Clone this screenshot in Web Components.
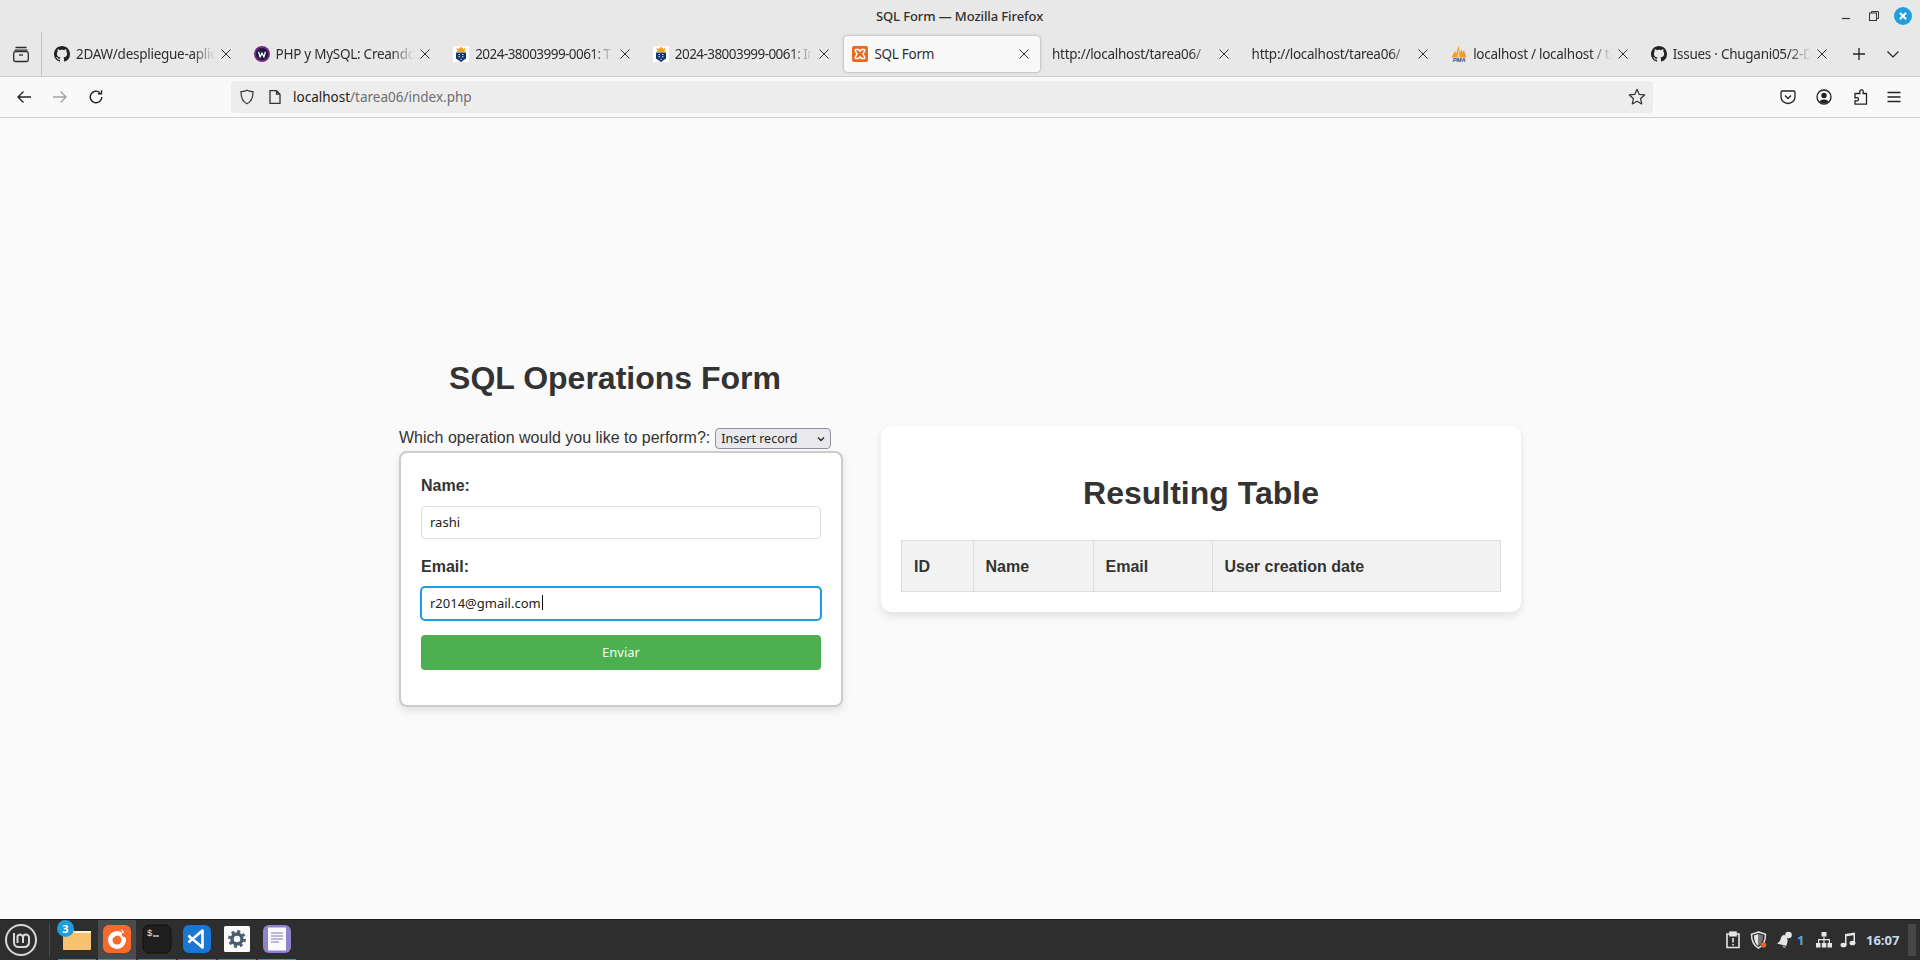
<!DOCTYPE html>
<html lang="en"><head><meta charset="utf-8"><title>SQL Form</title>
<style>
html,body{margin:0;padding:0;height:100%;overflow:hidden;background:#fafafa}
x-window{--ui:"Noto Sans","Open Sans",sans-serif}
.digits{letter-spacing:-.55px}
</style></head><body>
<x-window>
  <x-titlebar slot="title">SQL Form — Mozilla Firefox</x-titlebar>
  <x-tabstrip slot="tabs">
    <x-tab><svg slot="icon" viewBox="0 0 16 16"><path fill="#222" d="M8 0C3.58 0 0 3.58 0 8c0 3.54 2.29 6.53 5.47 7.59.4.07.55-.17.55-.38 0-.19-.01-.82-.01-1.49-2.01.37-2.53-.49-2.69-.94-.09-.23-.48-.94-.82-1.13-.28-.15-.68-.52-.01-.53.63-.01 1.08.58 1.23.82.72 1.21 1.87.87 2.33.66.07-.52.28-.87.51-1.07-1.78-.2-3.64-.89-3.64-3.95 0-.87.31-1.59.82-2.15-.08-.2-.36-1.02.08-2.12 0 0 .67-.21 2.2.82.64-.18 1.32-.27 2-.27.68 0 1.36.09 2 .27 1.53-1.04 2.2-.82 2.2-.82.44 1.1.16 1.92.08 2.12.51.56.82 1.27.82 2.15 0 3.07-1.87 3.75-3.65 3.95.29.25.54.73.54 1.48 0 1.07-.01 1.93-.01 2.2 0 .21.15.46.55.38A8.013 8.013 0 0016 8c0-4.42-3.58-8-8-8z"/></svg>2DAW/despliegue-aplica</x-tab>
    <x-tab><svg slot="icon" viewBox="0 0 16 16"><circle cx="8" cy="8" r="8" fill="#7b2c8e"/><circle cx="8" cy="8" r="6.2" fill="#221a3d"/><path d="M4.500 5.800l1.600 5 1.900-3.600 1.900 3.600 1.600-5" fill="none" stroke="#fff" stroke-width="1.300"/></svg>PHP y MySQL: Creando s</x-tab>
    <x-tab class="digits"><svg slot="icon" viewBox="0 0 16 16"><rect width="16" height="16" fill="#fff"/><path d="M3.500 1.500l2 1.500L8 .5l2.500 2.500 2-1.500-.8 4.500H4.300z" fill="#f2a51e"/><path d="M3 6.500h10v6L8 16l-5-3.500z" fill="#12376f"/><path d="M5.500 8.500h1.500M9 8.500h1.500M5.500 10.800h1.500M9 10.800h1.500M7.300 13.200h1.500" stroke="#dfe7f3" stroke-width="1.100"/></svg>2024-38003999-0061: T</x-tab>
    <x-tab class="digits"><svg slot="icon" viewBox="0 0 16 16"><rect width="16" height="16" fill="#fff"/><path d="M3.500 1.500l2 1.500L8 .5l2.500 2.500 2-1.500-.8 4.500H4.300z" fill="#f2a51e"/><path d="M3 6.500h10v6L8 16l-5-3.500z" fill="#12376f"/><path d="M5.500 8.500h1.500M9 8.500h1.500M5.500 10.800h1.500M9 10.800h1.500M7.300 13.200h1.500" stroke="#dfe7f3" stroke-width="1.100"/></svg>2024-38003999-0061: In</x-tab>
    <x-tab active><svg slot="icon" viewBox="0 0 16 16"><rect width="16" height="16" rx="2" fill="#e8691f"/><path d="M4 3.500h2.500L8 5.300 9.500 3.500H12a1 1 0 0 1 .6 1.600L11 8l1.600 2.900A1 1 0 0 1 12 12.500H9.500L8 10.700 6.500 12.500H4a1 1 0 0 1-.6-1.600L5 8 3.400 5.100A1 1 0 0 1 4 3.500z" fill="none" stroke="#fff" stroke-width="1.500"/></svg>SQL Form</x-tab>
    <x-tab>http://localhost/tarea06/</x-tab>
    <x-tab>http://localhost/tarea06/</x-tab>
    <x-tab><svg slot="icon" viewBox="0 0 16 16"><path d="M.5 11.500L4 4.500l1 3.500L7.500 0 9 7l1.500-3.500 1 3L13 4l2.500 7.500z" fill="#f29a2e"/><path d="M6 11.500L7.500 3 9 11.500z" fill="#f9d08a"/><text x="8" y="16" text-anchor="middle" font-family="Liberation Sans" font-size="6" font-weight="700" font-style="italic" fill="#2f5288">PMA</text></svg>localhost / localhost / ta</x-tab>
    <x-tab><svg slot="icon" viewBox="0 0 16 16"><path fill="#222" d="M8 0C3.58 0 0 3.58 0 8c0 3.54 2.29 6.53 5.47 7.59.4.07.55-.17.55-.38 0-.19-.01-.82-.01-1.49-2.01.37-2.53-.49-2.69-.94-.09-.23-.48-.94-.82-1.13-.28-.15-.68-.52-.01-.53.63-.01 1.08.58 1.23.82.72 1.21 1.87.87 2.33.66.07-.52.28-.87.51-1.07-1.78-.2-3.64-.89-3.64-3.95 0-.87.31-1.59.82-2.15-.08-.2-.36-1.02.08-2.12 0 0 .67-.21 2.2.82.64-.18 1.32-.27 2-.27.68 0 1.36.09 2 .27 1.53-1.04 2.2-.82 2.2-.82.44 1.1.16 1.92.08 2.12.51.56.82 1.27.82 2.15 0 3.07-1.87 3.75-3.65 3.95.29.25.54.73.54 1.48 0 1.07-.01 1.93-.01 2.2 0 .21.15.46.55.38A8.013 8.013 0 0016 8c0-4.42-3.58-8-8-8z"/></svg>Issues · Chugani05/2-DA</x-tab>
  </x-tabstrip>
  <x-toolbar slot="toolbar"><span class="host">localhost</span><span style="color:#6e6e6e">/tarea06/index.php</span></x-toolbar>
  <x-page slot="page">
    <x-form-panel slot="left" heading="SQL Operations Form" prompt="Which operation would you like to perform?:" option="Insert record"></x-form-panel>
    <x-result-card slot="right" heading="Resulting Table"></x-result-card>
  </x-page>
  <x-taskbar slot="taskbar"></x-taskbar>
</x-window>
<script>
function def(name,html,init){
  customElements.define(name,class extends HTMLElement{
    constructor(){super();const r=this.attachShadow({mode:'open'});r.innerHTML=typeof html==='function'?html(this):html;}
    connectedCallback(){ if(init&&!this._i){this._i=1;init(this,this.shadowRoot);} }
  });
}
def('x-window',`<style>:host{display:flex;flex-direction:column;height:960px;width:1920px;overflow:hidden;font-family:var(--ui)}
::slotted([slot=page]){flex:1}</style>
<slot name="title"></slot><slot name="tabs"></slot><slot name="toolbar"></slot><slot name="page"></slot><slot name="taskbar"></slot>`);

def('x-titlebar',`<style>:host{display:grid;grid-template-columns:1fr auto 1fr;align-items:center;height:32px;background:#e8e8e8;color:#2e2e2e;font-size:13px;letter-spacing:-.1px;font-weight:500}
.t{margin-left:-1px}
.c{display:flex;justify-content:flex-end;align-items:center;gap:0;padding-right:3px}
.b{width:28.500px;height:20px;display:flex;align-items:center;justify-content:center}
svg{display:block}</style>
<span></span><span class="t"><slot></slot></span>
<div class="c">
<span class="b"><svg width="12" height="12" viewBox="0 0 12 12"><path d="M2 8.500h8" stroke="#333" stroke-width="1.200"/></svg></span>
<span class="b"><svg width="12" height="12" viewBox="0 0 12 12" fill="none" stroke="#333"><rect x="1.500" y="3" width="7" height="7.500"/><path d="M3.500 3V1.500h7V8.500H8.500"/></svg></span>
<span class="b"><svg width="20" height="20" viewBox="0 0 20 20"><circle cx="10" cy="10" r="9" fill="#1f9ede"/><path d="M6.800 6.800l6.400 6.400M13.200 6.800l-6.400 6.400" stroke="#fff" stroke-width="2"/></svg></span>
</div>`);

def('x-tabstrip',`<style>:host{display:flex;align-items:stretch;height:45px;box-sizing:border-box;background:#e8e8e8;border-bottom:1px solid #cfcfcf}
.side{width:42px;display:flex;align-items:center;justify-content:center;box-sizing:border-box;border-right:1px solid #c4c4c4}
.gap{width:2px}
.tabs{display:grid;grid-template-columns:repeat(9,199.600px)}
.end{flex:1;display:flex;align-items:center;color:#222}
svg{display:block}</style>
<div class="side"><svg width="18" height="18" viewBox="0 0 18 18" fill="none" stroke="#2c2c2c" stroke-width="1.300"><path d="M3.500 2.500h11M2.500 5.200h13"/><rect x="1.700" y="6.700" width="14.600" height="9.800" rx="1.800"/><path d="M7 10h4"/></svg></div>
<div class="gap"></div>
<div class="tabs"><slot></slot></div>
<div class="end"><svg style="margin-left:12px" width="14" height="14" viewBox="0 0 14 14"><path d="M7 1v12M1 7h12" stroke="#222" stroke-width="1.300"/></svg>
<svg style="margin-left:20px" width="14" height="14" viewBox="0 0 14 14" fill="none"><path d="M1.500 4.500L7 10l5.500-5.500" stroke="#222" stroke-width="1.200"/></svg></div>`);

def('x-tab',`<style>:host{display:flex;align-items:center;box-sizing:border-box;height:36px;margin:4px 2px;padding:0 8px 0 8px;font-size:13.500px;color:#2e2e2e;letter-spacing:-.27px;border-radius:4px;position:relative;min-width:0;white-space:nowrap}
:host([active]){background:#f9f9f9;box-shadow:0 0 3px rgba(0,0,0,.35)}
::slotted(svg){width:16px;height:16px;flex:none;margin-right:6px}
.l{flex:1;overflow:hidden;min-width:0;-webkit-mask-image:linear-gradient(to right,#000 calc(100% - 22px),transparent)}
:host([active]) .l{-webkit-mask-image:none}
.x{flex:none;width:16px;height:16px;margin-left:3px;display:block}</style>
<slot name="icon"></slot><div class="l"><slot></slot></div>
<svg class="x" viewBox="0 0 16 16"><path d="M3.500 3.500l9 9M12.500 3.500l-9 9" stroke="#333" stroke-width="1"/></svg>`);

def('x-toolbar',`<style>:host{display:flex;align-items:center;box-sizing:border-box;height:41px;background:#f9f9f9;border-bottom:1px solid #cfcfcf;color:#222;padding-bottom:1px}
svg{display:block;flex:none}
.nav{display:flex;width:231px;padding-left:16px;box-sizing:border-box;gap:20px}
.url{width:1422px;height:32px;background:#ededed;border-radius:4px;display:flex;align-items:center;box-sizing:border-box;padding:0 7px 0 8px;font-size:13.500px;color:#222}
.url svg.s{margin-right:12px}.url svg.p{margin-right:10px}
.t{flex:1}
.right{display:flex;margin-left:127px;gap:20px}
.right svg:last-child{margin-left:-2px}</style>
<div class="nav">
<svg width="16" height="16" viewBox="0 0 16 16" fill="none" stroke="#222" stroke-width="1.400"><path d="M15 8H2M7.500 2.500L2 8l5.500 5.500"/></svg>
<svg width="16" height="16" viewBox="0 0 16 16" fill="none" stroke="#a3a3a3" stroke-width="1.400"><path d="M1 8h13M8.500 2.500L14 8l-5.500 5.500"/></svg>
<svg width="16" height="16" viewBox="0 0 16 16" fill="none" stroke="#222" stroke-width="1.400"><path d="M13.800 8A5.800 5.800 0 1 1 11.800 3.600M13.500 1.200v3.600H9.900"/></svg>
</div>
<div class="url">
<svg class="s" width="16" height="16" viewBox="0 0 16 16" fill="none" stroke="#333" stroke-width="1.200"><path d="M8 1.200c2 1 4 1.500 6 1.500 0 5.500-1.500 10-6 12-4.500-2-6-6.500-6-12 2 0 4-.5 6-1.500z"/></svg>
<svg class="p" width="16" height="16" viewBox="0 0 16 16" fill="none" stroke="#333" stroke-width="1.300"><path d="M3 1.700h6.500L13 5.200v9.100H3zM9.500 1.700v3.500H13"/></svg>
<span class="t"><slot></slot></span>
<svg width="18" height="18" viewBox="0 0 16 16" fill="none" stroke="#333" stroke-width="1.100"><path d="M8 1.200l2 4.500 4.800.5-3.600 3.200 1 4.800L8 11.800l-4.200 2.400 1-4.800L1.200 6.200 6 5.700z" stroke-linejoin="round"/></svg>
</div>
<div class="right">
<svg width="16" height="16" viewBox="0 0 16 16" fill="none" stroke="#222" stroke-width="1.300"><path d="M2.500 2h11A1.500 1.500 0 0 1 15 3.500V8A7 6.500 0 0 1 1 8V3.500A1.500 1.500 0 0 1 2.500 2z"/><path d="M5 6.500l3 3 3-3"/></svg>
<svg width="16" height="16" viewBox="0 0 16 16"><circle cx="8" cy="8" r="7" fill="none" stroke="#222" stroke-width="1.300"/><circle cx="8" cy="6.500" r="2.700" fill="#222"/><path d="M3.500 12.500C5 9.800 11 9.800 12.500 12.500 11 14.500 5 14.500 3.500 12.500z" fill="#222"/></svg>
<svg width="16" height="16" viewBox="0 0 16 16" fill="none" stroke="#222" stroke-width="1.300"><path d="M6.500 4.500H8C7.300 2 8 .8 9.500.8S11.700 2 11 4.500h3.500v10.700H3v-3.500c2.500.7 3.500-.2 3.500-1.500S5.500 8.300 3 9V4.500z" stroke-linejoin="round"/></svg>
<svg width="16" height="16" viewBox="0 0 16 16" stroke="#222" stroke-width="1.300"><path d="M1.500 3.500h13M1.500 8h13M1.500 12.500h13"/></svg>
</div>`);

def('x-page',`<style>:host{display:flex;align-items:flex-start;box-sizing:border-box;background:#fafafa;padding:242px 0 0 399px;min-height:0;overflow:hidden}
::slotted([slot=right]){margin-left:38px;margin-top:66px}</style><slot name="left"></slot><slot name="right"></slot>`);

def('x-form-panel',h=>`<style>:host{display:block;width:444px;font-family:"Liberation Sans",Arial,sans-serif;color:#333;font-size:16px}
h1{font-size:32px;line-height:37px;margin:0;height:37px;padding-right:12px;text-align:center;color:#333}
.q{display:flex;align-items:center;margin-top:30px;height:21px;gap:5px;white-space:nowrap;margin-bottom:3px;color:#333}
</style>
<h1>${h.getAttribute('heading')}</h1>
<div class="q"><span>${h.getAttribute('prompt')}</span><x-select>${h.getAttribute('option')}</x-select></div>
<x-form-card></x-form-card>`);

def('x-select',`<style>:host{display:flex;align-items:center;justify-content:space-between;box-sizing:border-box;width:116px;height:21px;margin-top:2px;padding:0 4px 0 5px;background:#e9e9ed;border:1px solid #8f8f9d;border-radius:4px;font:12.500px "Noto Sans",sans-serif;color:#222}</style>
<span><slot></slot></span><svg width="10" height="10" viewBox="0 0 10 10" fill="none"><path d="M2 3.500L5 6.500l3-3" stroke="#222" stroke-width="1.300"/></svg>`);

def('x-form-card',`<style>:host{display:flex;flex-direction:column;box-sizing:border-box;width:444px;background:#fff;border:2px solid #ccc;border-radius:8px;padding:24px 20px 35px;box-shadow:0 4px 8px rgba(0,0,0,.1)}
label{display:block;font-weight:700;line-height:18px;color:#333}
.m{margin-top:19px}.btn{margin-top:15px}</style>
<label>Name:</label><x-field>rashi</x-field>
<label class="m">Email:</label><x-field focused>r2014@gmail.com</x-field>
<x-button class="btn">Enviar</x-button>`);

def('x-field',`<style>:host{display:flex;align-items:center;box-sizing:border-box;margin-top:11px;height:33px;padding:0 8px 2px;background:#fff;border:1px solid #ddd;border-radius:4px;font:13px "Noto Sans",sans-serif;color:#222}
:host([focused]){outline:2px solid #1f9ede;outline-offset:-1px;border-color:#ddd}
i{display:none;width:1px;height:15px;background:#111;margin-left:1px}
:host([focused]) i{display:block}</style><span><slot></slot></span><i></i>`);

def('x-button',`<style>:host{display:flex;align-items:center;justify-content:center;box-sizing:border-box;height:35px;padding-bottom:2px;background:#4caf50;color:#f4fbf4;border-radius:4px;font:13px "Noto Sans",sans-serif}</style><slot></slot>`);

def('x-result-card',h=>`<style>:host{display:block;box-sizing:border-box;width:640px;background:#fff;border-radius:10px;padding:20px;box-shadow:0 4px 8px rgba(0,0,0,.1);font-family:"Liberation Sans",Arial,sans-serif;color:#333}
h2{font-size:32px;line-height:37px;margin:29px 0 28px;text-align:center}
table{width:600px;border-collapse:collapse;table-layout:fixed}
th{background:#f2f2f2;border:1px solid #ddd;text-align:left;padding:2px 12px 0;height:48px;font-size:16px;color:#333}</style>
<h2>${h.getAttribute('heading')}</h2>
<table><colgroup><col style="width:71.500px"><col style="width:120px"><col style="width:119px"><col></colgroup>
<tr><th>ID</th><th>Name</th><th>Email</th><th>User creation date</th></tr></table>`);

def('x-dock-item',`<style>:host{display:flex;align-items:center;justify-content:center;position:relative;width:38px;height:41px;box-sizing:border-box;border-bottom:2px solid #1f9ede;margin-right:2px;padding-bottom:2px}
:host([active]){background:#4b4b4b}
.badge{display:none;position:absolute;left:-1px;top:0;width:17px;height:17px;border-radius:50%;background:#1f9ede;color:#fff;font:700 11px/17px "Noto Sans",sans-serif;text-align:center}
:host([badge]) .badge{display:block}</style><slot></slot><span class="badge"></span>`,(h,r)=>{r.querySelector('.badge').textContent=h.getAttribute('badge')||''});

def('x-taskbar',`<style>:host{display:flex;align-items:stretch;height:41px;box-sizing:border-box;background:#2e2e2e;border-top:1px solid #1c1c1c;color:#e6e6e6}
svg{display:block}
.menu{width:50px;box-sizing:border-box;border-right:1px solid #4a4a4a;margin:3px 0;display:flex;align-items:center;padding-left:4px}
.dock{display:flex;padding-left:8px}
.tray{margin-left:auto;display:flex;align-items:center;padding-right:4px}
.clock{font:700 13px "Noto Sans",sans-serif;color:#c7dbea;margin-left:10px;width:36px}
.grip{width:8px;height:32px;background:#474747;margin-left:6px}
.one{font:700 13px "Noto Sans",sans-serif;color:#5aa7dc;width:8px;margin:0 11px 0 3.500px}
.tray svg{flex:none}</style>
<div class="menu"><svg width="34" height="34" viewBox="0 0 34 34" fill="none" stroke="#d9d9d9"><circle cx="17" cy="17" r="15" stroke-width="2"/><path stroke-width="2" d="M10 10v9.500a4.500 4.500 0 0 0 4.500 4.500h6a4.500 4.500 0 0 0 4.500-4.500v-5a3 3 0 0 0-6 0V20m0-5.500a3 3 0 0 0-5.500-1.500V20"/></svg></div>
<div class="dock">
<x-dock-item badge="3"><svg width="30" height="26" viewBox="0 0 30 26"><path d="M2 3.500h9l2 2h15a1 1 0 0 1 1 1V23a1 1 0 0 1-1 1H2a1 1 0 0 1-1-1V4.500a1 1 0 0 1 1-1z" fill="#f6c26f"/><path d="M11 5h18v2H13z" fill="#fff2d8"/></svg></x-dock-item>
<x-dock-item active><svg width="30" height="30" viewBox="0 0 30 30"><rect x="1" y="1" width="28" height="28" rx="6" fill="#f76a2e"/><circle cx="15" cy="16" r="9" fill="#fff"/><circle cx="15" cy="16" r="4.500" fill="#f76a2e"/><path d="M9 12c2-2 6-3 8-1-3 0-4 1-4 2l-3 1zM19 5c3 2 5 5 5 9l-3-3z" fill="#fff"/><path d="M20 9l5-1-1 6-4-2z" fill="#f76a2e"/></svg></x-dock-item>
<x-dock-item><svg width="30" height="30" viewBox="0 0 30 30"><rect x="1" y="1" width="28" height="28" rx="6" fill="#1f1f1f" stroke="#111"/><text x="5" y="12" font-family="Liberation Mono" font-size="9" fill="#eee">$</text><path d="M11 12h6" stroke="#eee" stroke-width="1.200"/></svg></x-dock-item>
<x-dock-item><svg width="30" height="30" viewBox="0 0 30 30"><rect x="1" y="1" width="28" height="28" rx="6" fill="#1976d2"/><path d="M20.500 6.500v17l-10-8.500 10-8.500zM6.500 11.500l3.500 3.500-3.500 3.500" fill="none" stroke="#fff" stroke-width="2.600" stroke-linejoin="round"/></svg></x-dock-item>
<x-dock-item><svg width="28" height="28" viewBox="0 0 28 28"><rect x="1" y="1" width="26" height="26" rx="1.500" fill="#fbfbfb"/><circle cx="14" cy="14" r="5" fill="none" stroke="#4b5b70" stroke-width="3.400"/><circle cx="14" cy="14" r="7.600" fill="none" stroke="#4b5b70" stroke-width="2.600" stroke-dasharray="3 2.970"/></svg></x-dock-item>
<x-dock-item><svg width="30" height="30" viewBox="0 0 30 30"><rect x="1" y="1" width="28" height="28" rx="6" fill="#8d85c9"/><rect x="6" y="3.500" width="18" height="23" fill="#fbfbff"/><path d="M9 9h12M9 12h12M9 15h12M9 18h8" stroke="#7d75b8" stroke-width="1.200"/></svg></x-dock-item>
</div>
<div class="tray">
<svg width="16" height="18" viewBox="0 0 16 18" fill="none" stroke="#e6e6e6" stroke-width="1.600"><path d="M5 3H2v13.500h12V3h-3"/><rect x="5" y="1.200" width="6" height="3.500" fill="#e6e6e6"/><path d="M8 7v4.500M8 13v1.500"/></svg>
<svg style="margin-left:9px" width="18" height="18" viewBox="0 0 18 18"><path d="M8.500 1l7 2.200c0 6-1.500 11-7 14-5.500-3-7-8-7-14z" fill="none" stroke="#e6e6e6" stroke-width="1.500"/><path d="M8.500 3v12C5 13 4 9 4 4.500z" fill="#e6e6e6"/><path d="M8.500 3l4.500 1.500c0 4-.8 7-4.500 10.500z" fill="#777"/><circle cx="13.500" cy="14" r="2.800" fill="#e2662b"/></svg>
<svg style="margin-left:8px" width="18" height="18" viewBox="0 0 18 18"><path d="M7.500 4C4.500 5 5 9 3.500 10.500L1 12.500l9.500 2.500c0-2 1.500-3.500 1-6.500C11 5.500 9.500 3.500 7.500 4z" fill="#e6e6e6"/><path d="M6.500 15a2.200 2.200 0 0 0 3.500 1z" fill="#e6e6e6"/><circle cx="12.500" cy="4" r="3.300" fill="#e6e6e6"/></svg>
<span class="one">1</span>
<svg width="16" height="16" viewBox="0 0 16 16" fill="#e6e6e6"><rect x="5.500" y="0" width="5" height="4.500"/><rect x="0" y="11" width="4.500" height="4.500"/><rect x="5.800" y="11" width="4.500" height="4.500"/><rect x="11.500" y="11" width="4.500" height="4.500"/><path d="M7.400 4.500h1.200V7H14v4h-1.200V8.200H8.600V11H7.400V8.200H3.200V11H2V7h5.400z"/></svg>
<svg style="margin-left:8px" width="16" height="16" viewBox="0 0 16 16" fill="#e6e6e6"><path d="M5 2l10-1.500v11h-1.500V3.200L6.500 4.300v9H5z"/><ellipse cx="3.500" cy="13" rx="3" ry="2.300"/><ellipse cx="12.500" cy="11" rx="3" ry="2.300"/></svg>
<span class="clock">16:07</span>
<span class="grip"></span>
</div>`);
</script>
</body></html>
